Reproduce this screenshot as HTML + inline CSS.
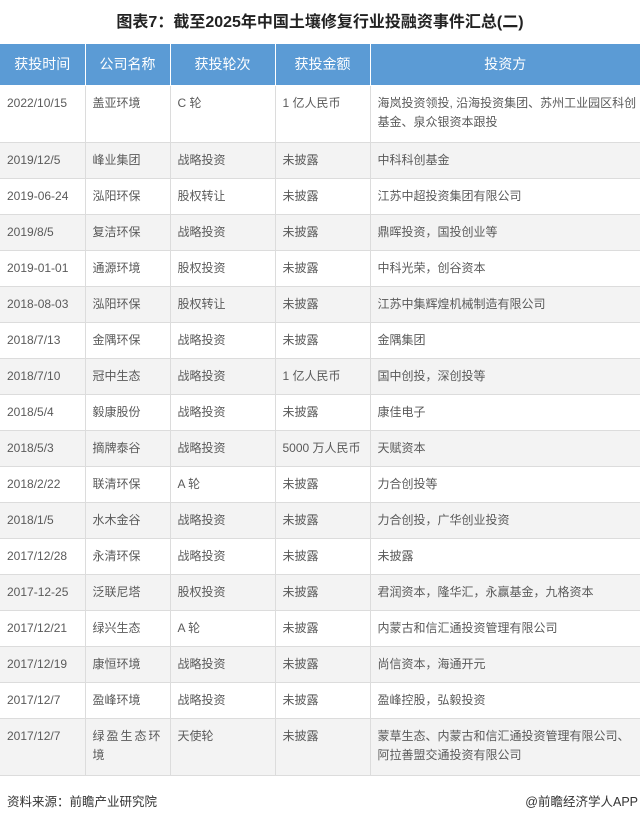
<!DOCTYPE html>
<html><head><meta charset="utf-8"><style>
body{margin:0;width:640px;height:820px;background:#fff;font-family:"Liberation Sans","Noto Sans CJK SC",sans-serif;position:relative;overflow:hidden}
.t{position:absolute;top:8px;left:0;width:640px;text-align:center;font-size:16px;font-weight:bold;color:#222}
table{position:absolute;top:43px;left:0;width:640px;border-collapse:collapse;table-layout:fixed}
td,th{border:1px solid #dcdcdc;font-size:12px;color:#5a5a5a;text-align:left;padding:0 0 0 7px;line-height:19px;font-weight:normal;vertical-align:middle}
th{background:#5b9bd5;color:#fff;font-size:14px;height:41px;text-align:center;padding:0;border-color:#fff}
tr.g td{background:#f3f3f3}
tr td{height:35px}
tr.d td{height:48px;vertical-align:top;padding-top:8px}
td:first-child,th:first-child{border-left:none}
td:last-child,th:last-child{border-right:none}
.f{position:absolute;top:791px;font-size:12.5px;color:#333}
</style></head><body>
<div class="t">图表7：截至2025年中国土壤修复行业投融资事件汇总(二)</div>
<table>
<colgroup><col style="width:85px"><col style="width:85px"><col style="width:105px"><col style="width:95px"><col style="width:270px"></colgroup>
<tr><th>获投时间</th><th>公司名称</th><th>获投轮次</th><th>获投金额</th><th>投资方</th></tr>
<tr class="d"><td>2022/10/15</td><td>盖亚环境</td><td>C 轮</td><td>1 亿人民币</td><td>海岚投资领投, 沿海投资集团、苏州工业园区科创基金、泉众银资本跟投</td></tr>
<tr class="g"><td>2019/12/5</td><td>峰业集团</td><td>战略投资</td><td>未披露</td><td>中科科创基金</td></tr>
<tr><td>2019-06-24</td><td>泓阳环保</td><td>股权转让</td><td>未披露</td><td>江苏中超投资集团有限公司</td></tr>
<tr class="g"><td>2019/8/5</td><td>复洁环保</td><td>战略投资</td><td>未披露</td><td>鼎晖投资，国投创业等</td></tr>
<tr><td>2019-01-01</td><td>通源环境</td><td>股权投资</td><td>未披露</td><td>中科光荣，创谷资本</td></tr>
<tr class="g"><td>2018-08-03</td><td>泓阳环保</td><td>股权转让</td><td>未披露</td><td>江苏中集辉煌机械制造有限公司</td></tr>
<tr><td>2018/7/13</td><td>金隅环保</td><td>战略投资</td><td>未披露</td><td>金隅集团</td></tr>
<tr class="g"><td>2018/7/10</td><td>冠中生态</td><td>战略投资</td><td>1 亿人民币</td><td>国中创投，深创投等</td></tr>
<tr><td>2018/5/4</td><td>毅康股份</td><td>战略投资</td><td>未披露</td><td>康佳电子</td></tr>
<tr class="g"><td>2018/5/3</td><td>摘牌泰谷</td><td>战略投资</td><td>5000 万人民币</td><td>天赋资本</td></tr>
<tr><td>2018/2/22</td><td>联清环保</td><td>A 轮</td><td>未披露</td><td>力合创投等</td></tr>
<tr class="g"><td>2018/1/5</td><td>水木金谷</td><td>战略投资</td><td>未披露</td><td>力合创投，广华创业投资</td></tr>
<tr><td>2017/12/28</td><td>永清环保</td><td>战略投资</td><td>未披露</td><td>未披露</td></tr>
<tr class="g"><td>2017-12-25</td><td>泛联尼塔</td><td>股权投资</td><td>未披露</td><td>君润资本，隆华汇，永赢基金，九格资本</td></tr>
<tr><td>2017/12/21</td><td>绿兴生态</td><td>A 轮</td><td>未披露</td><td>内蒙古和信汇通投资管理有限公司</td></tr>
<tr class="g"><td>2017/12/19</td><td>康恒环境</td><td>战略投资</td><td>未披露</td><td>尚信资本，海通开元</td></tr>
<tr><td>2017/12/7</td><td>盈峰环境</td><td>战略投资</td><td>未披露</td><td>盈峰控股，弘毅投资</td></tr>
<tr class="g d"><td>2017/12/7</td><td style="letter-spacing:2px">绿盈生态环境</td><td>天使轮</td><td>未披露</td><td>蒙草生态、内蒙古和信汇通投资管理有限公司、阿拉善盟交通投资有限公司</td></tr>
</table>
<div class="f" style="left:7px">资料来源：前瞻产业研究院</div>
<div class="f" style="right:2px">@前瞻经济学人APP</div>
</body></html>
